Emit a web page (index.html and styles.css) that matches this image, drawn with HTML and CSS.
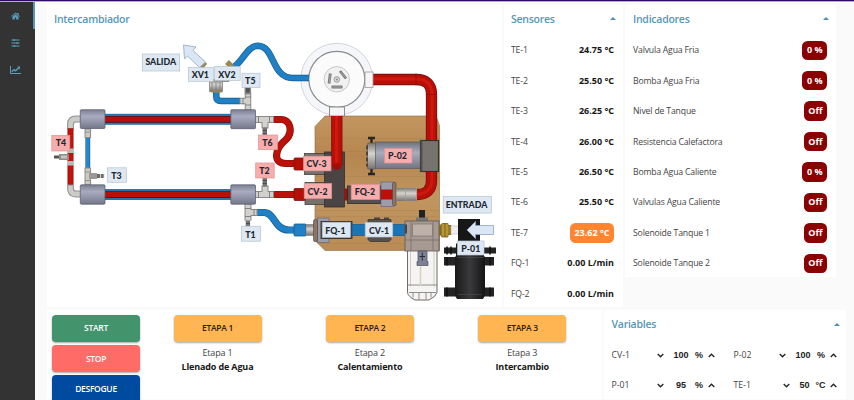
FILE: index.html
```html
<!DOCTYPE html>
<html lang="es">
<head>
<meta charset="utf-8">
<title>Intercambiador</title>
<link rel="stylesheet" href="styles.css">
</head>
<body>
<div class="topbar"></div>
<div class="app">
  <nav class="sidebar">
    <a class="nav active"><svg width="9" height="8" viewBox="0 0 10 8"><path d="M5 0 0 4.300l.6.6L5 1.100l4.400 3.800.6-.6-1.600-1.400V.6H7v1.100zM1.600 4.900V8h2.600V5.600h1.600V8h2.600V4.900L5 2z" fill="#5a9fbe"/></svg></a>
    <a class="nav"><svg width="9" height="8" viewBox="0 0 9 8"><path d="M.5 1h8M.5 4h8M.5 7h8M3 0v2M6.200 3v2M3.400 6v2" stroke="#5a9fbe" stroke-width="1.100" fill="none"/></svg></a>
    <a class="nav"><svg width="11" height="8" viewBox="0 0 11 8"><path d="M.5 0v7.500H11" stroke="#5a9fbe" fill="none"/><path d="M1.800 5.800 4 3.600l1.600 1.200 3.200-3" stroke="#5a9fbe" stroke-width="1.400" fill="none"/><path d="M7 .5h3v3z" fill="#5a9fbe"/></svg></a>
  </nav>
  <main class="content">
    <div class="row top">
      <section class="card diagram">
        <h2>Intercambiador</h2>
        <svg width="454" height="272" viewBox="47 34.5 454 272">
          <defs>
            <linearGradient id="cyl" x1="0" y1="0" x2="0" y2="1"><stop offset="0" stop-color="#7c7e92"/><stop offset=".35" stop-color="#a9abc0"/><stop offset="1" stop-color="#757789"/></linearGradient>
            <linearGradient id="wood" x1="0" y1="0" x2="0" y2="1"><stop offset="0" stop-color="#c3965f"/><stop offset=".3" stop-color="#b58650"/><stop offset=".6" stop-color="#c09560"/><stop offset="1" stop-color="#b98b55"/></linearGradient>
            <linearGradient id="motor" x1="0" y1="0" x2="0" y2="1"><stop offset="0" stop-color="#6f7280"/><stop offset=".4" stop-color="#a9acba"/><stop offset="1" stop-color="#737582"/></linearGradient>
            <linearGradient id="metal" x1="0" y1="0" x2="0" y2="1"><stop offset="0" stop-color="#777"/><stop offset=".4" stop-color="#d5d3d0"/><stop offset="1" stop-color="#77736f"/></linearGradient>
            <linearGradient id="pump"><stop offset="0" stop-color="#181818"/><stop offset=".5" stop-color="#3a3a3c"/><stop offset="1" stop-color="#141414"/></linearGradient>
          </defs>

          <!-- Base board -->
          <path d="M325 115.5H436L439.5 125V250H325L315 240V126z" fill="url(#wood)" stroke="#8c6a41" stroke-width=".6"/>
          <path d="M315 138h124M315 151h124M315 176h124M315 210h124M315 216h124M318 243h121" stroke="#a87b47" stroke-width=".5" opacity=".6"/>

          <!-- Tank -->
          <circle cx="336.8" cy="78.8" r="36" fill="#f5f6fa" stroke="#b9bac0" stroke-width=".6"/>
          <circle cx="336.8" cy="78.8" r="28" fill="#fbfbfc" stroke="#8b8b8d" stroke-width="1.2"/>
          <circle cx="336.8" cy="78.8" r="12.7" fill="#f1f1f1" stroke="#aaa" stroke-width=".6"/>
          <circle cx="336.8" cy="79" r="2.8" fill="#ddd" stroke="#777" stroke-width=".7"/>
          <circle cx="336.8" cy="79" r="1" fill="#888"/>
          <path d="M330.3 73 329 83M340 70.5 346 78M331.5 86.5H342.5" stroke="#777" stroke-width="2.8"/>
          <path d="M330.3 74 329.2 82M340.7 71.3 345.4 77.2M332.5 86.5H341.5" stroke="#aaa" stroke-width="1"/>

          <!-- Hot pipes -->
          <g fill="none">
            <path d="M373 79H416Q431.5 79 431.5 94V140M431.5 171V180Q431.5 194 417 194" stroke="#7a120b" stroke-width="11.3"/>
            <path d="M373 79H416Q431.5 79 431.5 94V140M431.5 171V180Q431.5 194 417 194" stroke="#b80f08" stroke-width="9.7"/>
            <path d="M373 78.5H416Q432 78.5 432 94V140M432 171V180Q431.5 193 417 193.5" stroke="#cf190f" stroke-width="3"/>
            <path d="M416 73V85M426 94H437" stroke="#7d0d08" stroke-width=".6"/>
          </g>
          <rect x="365" y="71.5" width="8" height="15.5" fill="#f5f5f5" stroke="#999" stroke-width=".8"/>
          <rect x="329.5" y="106.5" width="15" height="9" fill="#f5f5f5" stroke="#777" stroke-width=".8"/>

          <!-- Manifold -->
          <rect x="304.5" y="153" width="21" height="21" fill="#77716c" stroke="#443f3c" stroke-width=".8"/>
          <rect x="305" y="182" width="20.5" height="22" fill="#77716c" stroke="#443f3c" stroke-width=".8"/>
          <rect x="324.5" y="151.5" width="20" height="55" fill="#4a4544" stroke="#332f2e" stroke-width=".8"/>
          <path d="M336.8 115.5V164" stroke="#7a120b" stroke-width="11.3"/>
          <circle cx="336.8" cy="163.8" r="5.5" fill="#a30e08"/>
          <path d="M336.8 115.5V163" stroke="#b80f08" stroke-width="9.7"/>
          <path d="M336.5 115.5V162" stroke="#cf190f" stroke-width="3"/>

          <!-- Hot pump P-02 -->
          <path d="M371.5 137V174M368 137.5H375M368 173.5H375" stroke="#262626" stroke-width="2.4"/>
          <rect x="375" y="141.5" width="46" height="26.5" fill="url(#motor)" stroke="#555" stroke-width=".6"/>
          <rect x="367.5" y="142.5" width="8" height="26" rx="1" fill="url(#metal)" stroke="#555" stroke-width=".6"/>
          <path d="M367 145V166" stroke="#333" stroke-width="1.5" stroke-dasharray="4 2"/>
          <rect x="420.5" y="140" width="18" height="31" fill="#77736f" stroke="#35322f" stroke-width="1.2"/>
          <rect x="420.5" y="140" width="2" height="31" fill="#55514e"/>

          <!-- Flow meter FQ-2 -->
          <rect x="344.5" y="188" width="4" height="12" fill="#a30e08"/>
          <rect x="347.5" y="185.5" width="33.5" height="17.5" fill="#55504c" stroke="#2e2a28" stroke-width=".8"/>
          <rect x="381" y="181.5" width="13" height="24.5" fill="#9c9dac" stroke="#66677a" stroke-width=".7"/>
          <rect x="381" y="189" width="12" height="10" fill="#bd0f08"/>
          <rect x="392.5" y="182" width="3.5" height="23" rx="1" fill="#8a7568" stroke="#54443a" stroke-width=".6"/>
          <rect x="396.5" y="187.5" width="9" height="13" fill="url(#metal)"/>
          <rect x="405.5" y="187.5" width="11" height="13" fill="url(#metal)" stroke="#999" stroke-width=".5"/>

          <!-- Heat exchangers -->
          <g>
            <rect x="104" y="113.3" width="128" height="11" fill="#2a74ab"/>
            <rect x="104" y="115.5" width="128" height="6.8" fill="#5a1219"/>
            <rect x="104" y="116.3" width="128" height="5" fill="#b81009"/>
            <rect x="104" y="188.5" width="128" height="11" fill="#2a74ab"/>
            <rect x="104" y="190.7" width="128" height="6.8" fill="#5a1219"/>
            <rect x="104" y="191.5" width="128" height="5" fill="#b81009"/>
          </g>

          <!-- Left side loop -->
          <g fill="none">
            <path d="M81 118.5H76Q70.5 118.5 70.5 124V129M81 193.5H76Q70.5 193.5 70.5 188V184" stroke="#8f8f8f" stroke-width="6.8"/>
            <path d="M81 118.5H76Q70.5 118.5 70.5 124V128M81 193.5H76Q70.5 193.5 70.5 188V185" stroke="#cdcbc8" stroke-width="4.8"/>
            <path d="M70.5 128V184" stroke="#7c120d" stroke-width="6"/>
            <path d="M70.5 128V184" stroke="#c41209" stroke-width="4.6"/>
            <path d="M70.5 148V152.5M70.5 160.5V165" stroke="#bdbbb8" stroke-width="7"/>
            <path d="M54 156.5H60" stroke="#555" stroke-width="3"/>
            <path d="M59 156.5H69" stroke="#8e8b88" stroke-width="6"/>
            <path d="M61 156.5H67" stroke="#c7c5c2" stroke-width="3"/>
            <path d="M87.8 136V168" stroke="#1a5688" stroke-width="4.8"/>
            <path d="M87.8 136V168" stroke="#2587cc" stroke-width="3.6"/>
            <path d="M87.8 128V137.5M87.8 167V184.5" stroke="#8b8b8b" stroke-width="6.6"/>
            <path d="M87.8 129V136.5M87.8 168V184" stroke="#ccc9c5" stroke-width="4.6"/>
            <path d="M85 171.5H91M85 180H91M85 131.5H91" stroke="#888" stroke-width=".8"/>
            <path d="M89 175.5H97" stroke="#9b9895" stroke-width="6"/>
            <path d="M97 175.5H104.5" stroke="#6b6b6b" stroke-width="3.8" stroke-dasharray="3 .7"/>
          </g>
          <g fill="url(#cyl)" stroke="#55576b" stroke-width=".7">
            <rect x="80.3" y="109.2" width="24.7" height="18.8" rx="1"/>
            <rect x="80.3" y="184.3" width="24.7" height="19.4" rx="1"/>
          </g>

          <!-- Cold outlet -->
          <g fill="none">
            <path d="M232.5 67.500C243 61 247 45.500 258 45.200C275 45.500 271 77.500 293 77.500H309" stroke="#155a8e" stroke-width="6.6"/>
            <path d="M232.5 67.500C243 61 247 45.500 258 45.200C275 45.500 271 77.500 293 77.500H309" stroke="#1f80c5" stroke-width="5.2"/>
            <path d="M216.3 91V96Q216.3 100.5 221 100.5H240" stroke="#155a8e" stroke-width="6.5"/>
            <path d="M216.3 91V96Q216.3 100.5 221 100.5H240" stroke="#1f80c5" stroke-width="5"/>
            <path d="M200.5 67 205 61.5M232 66.5 227 61.5" stroke="#9a8754" stroke-width="5.5"/>
            <path d="M247.8 86V94M248 92V109.5M239.5 100.5H251" stroke="#888" stroke-width="6.5"/>
            <path d="M247.8 87V92" stroke="#555" stroke-width="4"/>
            <path d="M248 94V109M240.5 100.5H250" stroke="#d2d0cd" stroke-width="4.6"/>
            <path d="M245 104.5H251M245 96.5H251M243 97.5V104" stroke="#777" stroke-width=".8"/>
          </g>
          <path d="M210 79H229V81H222.5V91H209.5V81z" fill="url(#metal)" stroke="#666" stroke-width=".6"/>
          <path d="M212 82V90M216 82V90M220 82V90" stroke="#777" stroke-width=".7"/>
          <rect x="211" y="90" width="11" height="2" fill="#9b8353"/>

          <!-- Right side loop -->
          <g fill="none">
            <path d="M273 119H281C291 119 293 132 286 139C275 148 272 163 286 163H296M273 194H296" stroke="#7a120b" stroke-width="7.2"/>
            <path d="M273 119H281C291 119 293 132 286 139C275 148 272 163 286 163H296M273 194H296" stroke="#bd1009" stroke-width="5.8"/>
            <path d="M256 212H264C275 212 274 229.5 289 229.5H295" stroke="#155a8e" stroke-width="7.2"/>
            <path d="M256 212H264C275 212 274 229.5 289 229.5H295" stroke="#1f80c5" stroke-width="5.8"/>
            <path d="M255 119H274M265 119V128M255 194H274M265 194V185M248 203V220M247 212H257.5" stroke="#8a8987" stroke-width="7"/>
            <path d="M255 119H273M265 119V127M255 194H273M265 194V186M248 204V219.5M247 212H256.5" stroke="#d3d1ce" stroke-width="5"/>
            <path d="M258.5 116V122M269.5 116V122M258.5 191V197M269.5 191V197M245 208H251M245 216H251M254 209V215" stroke="#777" stroke-width=".9"/>
            <path d="M264.8 127V136M264.8 177V186M247.9 220V227" stroke="#747474" stroke-width="4.4"/>
            <path d="M262.5 130H267M262.5 133H267M262.5 180H267M262.5 183H267M246 223H250" stroke="#444" stroke-width=".8"/>
          </g>
          <rect x="294" y="157.5" width="11" height="12" rx="1" fill="#b50f08" stroke="#7a120b" stroke-width=".8"/>
          <rect x="294" y="188" width="11" height="12" rx="1" fill="#b50f08" stroke="#7a120b" stroke-width=".8"/>
          <rect x="294" y="223.5" width="12" height="12" rx="1" fill="#1f80c5" stroke="#155a8e" stroke-width=".8"/>
          <g fill="url(#cyl)" stroke="#55576b" stroke-width=".7">
            <rect x="230.8" y="109.2" width="24.7" height="19" rx="1"/>
            <rect x="230.8" y="184.3" width="24.7" height="19.4" rx="1"/>
          </g>

          <!-- Cold inlet -->
          <rect x="306" y="224" width="8" height="11" fill="url(#metal)" stroke="#777" stroke-width=".5"/>
          <rect x="317.5" y="217.5" width="11.5" height="24.5" fill="#9c9dac" stroke="#66677a" stroke-width=".7"/>
          <rect x="313.5" y="219" width="4" height="22" rx="1.5" fill="#8a7568" stroke="#54443a" stroke-width=".6"/>
          <rect x="321" y="221" width="31" height="17" fill="#55504c" stroke="#2e2a28" stroke-width=".8"/>
          <rect x="352" y="224" width="54" height="11" fill="#1a75b6" stroke="#155a8e" stroke-width=".7"/>
          <path d="M374 218H380M384 218H389" stroke="#4a4543" stroke-width="2"/>
          <path d="M368 219H391V239L389 241H370L368 239z" fill="#55504e" stroke="#332f2d" stroke-width=".7"/>

          <!-- Filter -->
          <rect x="419" y="209.5" width="6" height="9" fill="#222"/>
          <rect x="416" y="217" width="12" height="4" fill="#777"/>
          <path d="M407.5 250H437V292Q436 296 429 299.5H415Q408 296 407.5 292z" fill="#f5f4f2" stroke="#6d6a68" stroke-width="1"/>
          <path d="M410.5 251V286M434 251V286" stroke="#cecbc8" stroke-width="1"/>
          <path d="M407.5 284.5H437M409 292H436M413 292V297M419 292V299M426 292V299M431 292V297" stroke="#777" stroke-width=".8" fill="none"/>
          <rect x="405" y="220.5" width="34" height="30" fill="#a79a93" stroke="#5e5652" stroke-width=".8"/>
          <path d="M405 239.5H439M411 221V250M433 221V250" stroke="#746b66" stroke-width=".7"/>
          <rect x="412.5" y="223.5" width="20" height="12" fill="#bdb1aa" stroke="#746b66" stroke-width=".6"/>
          <path d="M405 224H407V233H405z" fill="#444"/>
          <path d="M418 250.5H427V261H428V265H417V261H418z" fill="#7d8195" stroke="#4c4f60" stroke-width=".7"/>
          <path d="M422.3 252V260M419.5 256H425" stroke="#262838" stroke-width="1"/>
          <path d="M420.5 266V286" stroke="#d8d2bd" stroke-width="1.5"/>

          <!-- Cold pump P-01 -->
          <path d="M440 225 442 223H448V225H451V234H448V236.5H442L440 234z" fill="#9c7c22" stroke="#594714" stroke-width=".7"/>
          <path d="M443 223V236M447 223V236" stroke="#d0ae4b" stroke-width="1"/>
          <rect x="451" y="225.5" width="8" height="8" fill="#eee" stroke="#bbb" stroke-width=".6"/>
          <path d="M444 247H496V253H444zM444 256.5H494V265H444zM444 287H494V296H444z" fill="#242424"/>
          <path d="M447 246V254M451 246V254M490 246V254M447 257V265M490 257V265M447 287V296M490 287V296" stroke="#111" stroke-width="1.5"/>
          <rect x="458" y="218.5" width="22" height="26" fill="#171717"/>
          <path d="M456 243H484V256H485V295L483 298.5H457L455 295V256H456z" fill="url(#pump)"/>
          <path d="M457 257H484M458 294H482" stroke="#505052" stroke-width=".6"/>

          <!-- Flow arrows -->
          <g fill="#dbe6f4" stroke="#8ea6c8" stroke-width=".8">
            <path d="M183.5 44.5 196 46.5 193 50 205.5 61.5 199.5 67 187.5 55.5 184.5 58.5z"/>
            <path d="M467 229.5 475.5 221V225H493.5V234H475.5V238z"/>
          </g>

          <!-- Tags -->
          <g fill="#dde8f3" stroke="#b6c3ce" stroke-width=".7">
            <rect x="142.3" y="53.5" width="37.4" height="17"/>
            <rect x="188.3" y="67" width="25" height="13.8"/>
            <rect x="214.7" y="66" width="25.5" height="14"/>
            <rect x="242" y="72.7" width="18" height="14.3"/>
            <rect x="107.3" y="167.3" width="19" height="14.5"/>
            <rect x="241.5" y="225.7" width="19" height="15"/>
            <rect x="322.3" y="221.8" width="28" height="15"/>
            <rect x="365.2" y="222" width="27.5" height="14.5"/>
            <rect x="443.2" y="195.8" width="48.3" height="16.8"/>
            <rect x="457.5" y="240.5" width="26.5" height="14"/>
          </g>
          <g fill="#f8acac" stroke="#d89596" stroke-width=".7">
            <rect x="51.8" y="134.8" width="18" height="15.7"/>
            <rect x="258.5" y="134.5" width="19" height="14.7"/>
            <rect x="255.7" y="162.5" width="18.5" height="15"/>
            <rect x="303.5" y="155.7" width="27.5" height="14.7"/>
            <rect x="304.2" y="183" width="27.5" height="15"/>
            <rect x="351.2" y="184" width="28.5" height="15"/>
            <rect x="384.5" y="148" width="27.5" height="14.5"/>
          </g>
          <g class="tags">
            <text x="160.8" y="64.9">SALIDA</text><text x="200.3" y="77.8">XV1</text><text x="227" y="77">XV2</text><text x="250.3" y="83.5">T5</text>
            <text x="116.5" y="178">T3</text><text x="250.5" y="237">T1</text><text x="335.5" y="233">FQ-1</text><text x="379" y="233.2">CV-1</text>
            <text x="466.5" y="207.3">ENTRADA</text><text x="470.8" y="251">P-01</text><text x="61" y="145.8">T4</text><text x="267.5" y="145.7">T6</text>
            <text x="264.5" y="173">T2</text><text x="316.5" y="166.3">CV-3</text><text x="317.5" y="194">CV-2</text><text x="365" y="194.7">FQ-2</text><text x="397.5" y="158.8">P-02</text>
          </g>
        </svg>
      </section>
      <section class="card sensors">
        <h2>Sensores<i class="caret"></i></h2>
        <dl>
          <div><dt>TE-1</dt><dd>24.75 °C</dd></div>
          <div><dt>TE-2</dt><dd>25.50 °C</dd></div>
          <div><dt>TE-3</dt><dd>26.25 °C</dd></div>
          <div><dt>TE-4</dt><dd>26.00 °C</dd></div>
          <div><dt>TE-5</dt><dd>26.50 °C</dd></div>
          <div><dt>TE-6</dt><dd>25.50 °C</dd></div>
          <div><dt>TE-7</dt><dd class="badge warn">23.62 °C</dd></div>
          <div><dt>FQ-1</dt><dd>0.00 L/min</dd></div>
          <div><dt>FQ-2</dt><dd>0.00 L/min</dd></div>
        </dl>
      </section>
      <section class="card indicators">
        <h2>Indicadores<i class="caret"></i></h2>
        <dl>
          <div><dt>Valvula Agua Fria</dt><dd class="badge">0 %</dd></div>
          <div><dt>Bomba Agua Fria</dt><dd class="badge">0 %</dd></div>
          <div><dt>Nivel de Tanque</dt><dd class="badge">Off</dd></div>
          <div><dt>Resistencia Calefactora</dt><dd class="badge">Off</dd></div>
          <div><dt>Bomba Agua Caliente</dt><dd class="badge">0 %</dd></div>
          <div><dt>Valvulas Agua Caliente</dt><dd class="badge">Off</dd></div>
          <div><dt>Solenoide Tanque 1</dt><dd class="badge">Off</dd></div>
          <div><dt>Solenoide Tanque 2</dt><dd class="badge">Off</dd></div>
        </dl>
      </section>
    </div>
    <div class="row bottom">
      <section class="card controls">
        <div class="actions">
          <button class="btn start">START</button>
          <button class="btn stop">STOP</button>
          <button class="btn vent">DESFOGUE</button>
        </div>
        <div class="stage"><button class="btn">ETAPA 1</button><span>Etapa 1</span><b>Llenado de Agua</b></div>
        <div class="stage"><button class="btn">ETAPA 2</button><span>Etapa 2</span><b>Calentamiento</b></div>
        <div class="stage"><button class="btn">ETAPA 3</button><span>Etapa 3</span><b>Intercambio</b></div>
      </section>
      <section class="card variables">
        <h2>Variables<i class="caret"></i></h2>
        <div class="vars">
          <div class="var"><span>CV-1</span><svg class="chev" viewBox="0 0 7 5"><path d="M.7 1 3.5 3.8 6.3 1"/></svg><b class="num">100</b><b class="unit">%</b><svg class="chev" viewBox="0 0 7 5"><path d="M.7 4 3.5 1.2 6.3 4"/></svg></div>
          <div class="var"><span>P-02</span><svg class="chev" viewBox="0 0 7 5"><path d="M.7 1 3.5 3.8 6.3 1"/></svg><b class="num">100</b><b class="unit">%</b><svg class="chev" viewBox="0 0 7 5"><path d="M.7 4 3.5 1.2 6.3 4"/></svg></div>
          <div class="var"><span>P-01</span><svg class="chev" viewBox="0 0 7 5"><path d="M.7 1 3.5 3.8 6.3 1"/></svg><b class="num">95</b><b class="unit">%</b><svg class="chev" viewBox="0 0 7 5"><path d="M.7 4 3.5 1.2 6.3 4"/></svg></div>
          <div class="var temp"><span>TE-1</span><svg class="chev" viewBox="0 0 7 5"><path d="M.7 1 3.5 3.8 6.3 1"/></svg><b class="num">50</b><b class="unit">°C</b><svg class="chev" viewBox="0 0 7 5"><path d="M.7 4 3.5 1.2 6.3 4"/></svg></div>
        </div>
      </section>
    </div>
  </main>
</div>
</body>
</html>
```
FILE: styles.css
```css
* { box-sizing: border-box; }
body {
  margin: 0;
  height: 400px;
  overflow: hidden;
  background: #fafafa;
  color: #444;
  font: 9px/12px "Open Sans", "Noto Sans", sans-serif;
}
.topbar { height: 2px; background: linear-gradient(#2b0a60 65%, #bba9cf 65%); }
.app { display: flex; height: 398px; }
.sidebar {
  width: 35px;
  background: #333;
  flex: none;
}
.nav {
  display: flex;
  align-items: center;
  justify-content: center;
  height: 27px;
  padding-right: 4px;
}
.nav.active { border-right: 2px solid #5598b7; padding-right: 2px; }
.content { padding: 3px 0 0 12px; width: 819px; }
.row { display: flex; align-items: flex-start; }
.top { gap: 2px; height: 305px; }
.card { background: #fff; flex: none; }
h2 {
  display: flex;
  align-items: center;
  justify-content: space-between;
  margin: 0;
  height: 29.5px;
  padding: 0 7px 2px;
  color: #5698b5;
  font-size: 10.5px;
  font-weight: 600;
  letter-spacing: -.25px;
}
.caret {
  border: 3px solid transparent;
  border-top: 0;
  border-bottom: 3.5px solid #4d91b0;
}
.diagram { width: 455px; height: 302px; }
.diagram svg { display: block; }
.tags text {
  font: 900 8.8px Lato, sans-serif;
  fill: #1d2830;
  text-anchor: middle;
}
.sensors { width: 119px; height: 302px; }
.indicators { width: 211px; height: 272px; }
dl { margin: 0; padding-top: .5px; }
dl > div {
  display: flex;
  align-items: center;
  justify-content: space-between;
  height: 30.45px;
  padding: 0 9px 0 7px;
}
.indicators dl > div { padding-left: 8px; }
.indicators h2 { padding-left: 8px; }
dt { font-size: 8.7px; letter-spacing: -.17px; }
dd { margin: 0; color: #161616; font-weight: 700; }
.badge {
  padding: 3.7px 4.5px;
  border-radius: 5.5px;
  background: #8b0000;
  color: #fff;
}
.badge.warn { background: #ff8533; }
.bottom { gap: 1.5px; }
.controls {
  display: flex;
  width: 555px;
  height: 89px;
  padding: 4.5px 0 0 5px;
}
.actions { display: flex; flex-direction: column; gap: 3.3px; margin-right: 33.5px; }
.btn {
  width: 88px;
  height: 27.2px;
  flex: none;
  padding: 0;
  border: 0;
  border-radius: 4px;
  background: #ffb552;
  color: #2b2112;
  font: 600 8.5px/12px "Open Sans", sans-serif;
  letter-spacing: -.3px;
  box-shadow: 0 1px 2px rgba(0, 0, 0, .35);
}
.start { background: #43936c; color: #fff; }
.stop { background: #ff6b66; color: #fff; }
.vent { background: #004a9f; color: #fff; }
.stage {
  display: flex;
  flex-direction: column;
  align-items: center;
  width: 88px;
  margin-right: 64.4px;
}
.stage span { margin-top: 5px; letter-spacing: -.15px; }
.stage b { margin-top: 2px; color: #161616; white-space: nowrap; letter-spacing: -.15px; }
.variables { width: 242px; height: 89px; }
.variables h2 { height: 30px; padding: 0 6px 2px 8px; }
.vars { display: grid; grid-template-columns: 122px 121px; padding-left: 8px; }
.var { display: flex; align-items: center; height: 30.3px; }
.var span { width: 45.5px; font-size: 8.7px; }
.var .num { width: 29px; padding-left: 5px; text-align: center; }
.var .unit { width: 15px; padding-right: 3px; text-align: center; }
.var b { color: #222; font-family: "Liberation Sans", sans-serif; }
.var.temp span { width: 49.5px; }
.var.temp .num { width: 24px; }
.var.temp .unit { width: 16px; }
.chev { width: 7px; height: 5px; flex: none; fill: none; stroke: #222; stroke-width: 1.3; }
```
